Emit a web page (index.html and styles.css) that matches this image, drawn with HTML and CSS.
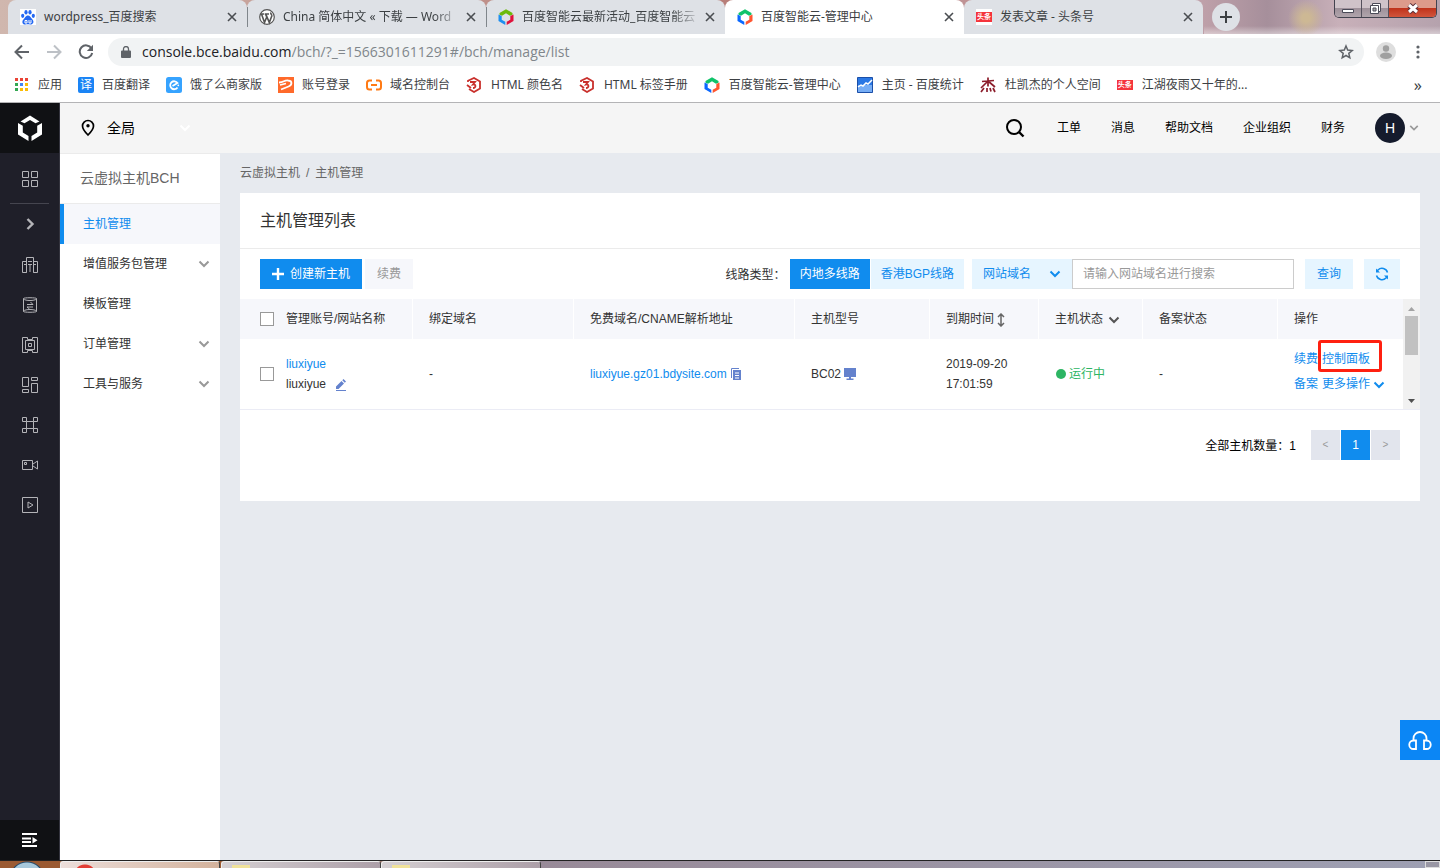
FILE: index.html
```html
<!DOCTYPE html>
<html lang="zh-CN">
<head>
<meta charset="utf-8">
<title>百度智能云-管理中心</title>
<link rel="stylesheet" href="styles.css">
</head>
<body>
<svg class="defs" aria-hidden="true">
  <symbol id="close" viewBox="0 0 10 10"><path d="M1 1l8 8M9 1l-8 8" fill="none" stroke="#4a4d51" stroke-width="1.6"/></symbol>
  <symbol id="down" viewBox="0 0 12 8"><path d="M1.500 1.500L6 6l4.500-4.500" fill="none" stroke="currentColor" stroke-width="2"/></symbol>
  <symbol id="cloud" viewBox="0 0 16 16">
    <path d="M1.500 4L8 .2 14.500 4v1.800L12 6.800 8 4.300 4 6.800 1.500 5.800z" fill="var(--top)"/>
    <path d="M.5 5.500l3.200 1.500v3.800L7.300 12.800V16L.5 12z" fill="var(--left)"/>
    <path d="M15.500 5.500L12.300 7v3.800L8.700 12.800V16l6.800-4z" fill="var(--right)"/>
  </symbol>
  <symbol id="html" viewBox="0 0 16 16"><path d="M2 5V3.800L8 1l6 3.500v7L8 15l-5-3" fill="none" stroke="#c9302c" stroke-width="1.800"/><path d="M4 5h5L7 7.500c3-.5 3.500 3.500 0 3.500M1 8l4 3" fill="none" stroke="#c9302c" stroke-width="1.800"/></symbol>
</svg>

<header class="browser">
  <div class="tabstrip">
    <div class="tab">
      <svg class="fav" viewBox="0 0 16 16"><path fill="#fff" d="M0 0h16v16H0z"/><g fill="#2468f2"><ellipse cx="2.700" cy="6.800" rx="1.600" ry="2.100"/><ellipse cx="6" cy="3.200" rx="1.600" ry="2.200"/><ellipse cx="10" cy="3.200" rx="1.600" ry="2.200"/><ellipse cx="13.300" cy="6.800" rx="1.600" ry="2.100"/><path d="M8 6.500c2 0 2.500 2 4.500 4 2 2.500.5 5-2 5-1.500 0-3.500-.5-5 0-2.500.3-4-2-2.500-4.500C5 9 5.500 6.500 8 6.500z"/></g><path d="M5 11.500h2v2.500H5zM9 11v3h2v-3" fill="none" stroke="#fff"/></svg>
      <span class="tab-title">wordpress_百度搜索</span>
      <button class="tab-close" aria-label="关闭"><svg><use href="#close"/></svg></button>
    </div>
    <div class="tab divided">
      <svg class="fav" viewBox="0 0 16 16"><circle cx="8" cy="8" r="7.300" fill="#fff" stroke="#555" stroke-width="1.200"/><path d="M2.500 5l3 8.500L7.700 8 6.500 5M6.800 5l3.500 8.500 2.500-6.500c.3-1.500-1.500-2-1-3.500M1.800 5h3.500M6 5h4" fill="none" stroke="#555" stroke-width="1.600"/></svg>
      <span class="tab-title fade">China 简体中文 « 下载 — Word</span>
      <button class="tab-close" aria-label="关闭"><svg><use href="#close"/></svg></button>
    </div>
    <div class="tab divided">
      <svg class="fav promo"><use href="#cloud"/></svg>
      <span class="tab-title fade">百度智能云最新活动_百度智能云</span>
      <button class="tab-close" aria-label="关闭"><svg><use href="#close"/></svg></button>
    </div>
    <div class="tab active">
      <svg class="fav console"><use href="#cloud"/></svg>
      <span class="tab-title">百度智能云-管理中心</span>
      <button class="tab-close" aria-label="关闭"><svg><use href="#close"/></svg></button>
    </div>
    <div class="tab">
      <span class="fav news">头条</span>
      <span class="tab-title">发表文章 - 头条号</span>
      <button class="tab-close" aria-label="关闭"><svg><use href="#close"/></svg></button>
    </div>
    <button class="newtab" aria-label="新标签页"><svg viewBox="0 0 12 12"><path d="M6 0v12M0 6h12" stroke="#3c4043" stroke-width="2"/></svg></button>
    <div class="winctl">
      <button aria-label="最小化"><svg viewBox="0 0 14 14"><path d="M1.500 7.500h11v3h-11z" fill="#fff" stroke="#4b4b58"/></svg></button>
      <button aria-label="还原"><svg viewBox="0 0 14 14"><path d="M4.500 1.500h8v8h-8z" fill="#fff" stroke="#4b4b58"/><path d="M2.500 3.500h8v8h-8z" fill="#fff" stroke="#4b4b58"/><path d="M5 6h3v3H5z" fill="#aaa" stroke="#4b4b58"/></svg></button>
      <button class="win-close" aria-label="关闭窗口"><svg viewBox="0 0 14 14"><path d="M3 3l8 7M11 3l-8 7" stroke="#5a3038" stroke-width="5"/><path d="M3 3l8 7M11 3l-8 7" stroke="#fff" stroke-width="3"/></svg></button>
    </div>
  </div>

  <div class="navbar">
    <button aria-label="后退"><svg viewBox="0 0 16 16"><path d="M15 8H2M8 1.500L1.500 8 8 14.500" fill="none" stroke="#5f6368" stroke-width="2"/></svg></button>
    <button aria-label="前进"><svg viewBox="0 0 16 16"><path d="M1 8h13M8 1.500L14.500 8 8 14.500" fill="none" stroke="#bdc1c6" stroke-width="2"/></svg></button>
    <button aria-label="刷新"><svg viewBox="0 0 16 16"><path d="M13.500 4.500A6.300 6.300 0 1 0 14.200 9" fill="none" stroke="#5f6368" stroke-width="2"/><path d="M15 .8V7H8.800z" fill="#5f6368"/></svg></button>
    <div class="omnibox">
      <svg class="lock" viewBox="0 0 10 12"><path d="M1 4.500h8a1 1 0 0 1 1 1V11a1 1 0 0 1-1 1H1a1 1 0 0 1-1-1V5.500a1 1 0 0 1 1-1z" fill="#5f6368"/><path d="M2.500 5V3a2.500 2.500 0 0 1 5 0v2" fill="none" stroke="#5f6368" stroke-width="1.300"/></svg>
      <div class="url"><b>console.bce.baidu.com</b>/bch/?_=1566301611291#/bch/manage/list</div>
      <svg class="star" viewBox="0 0 16 16"><path d="M8 2l1.700 4.100 4.500.4-3.400 2.900 1 4.400L8 11.500l-3.800 2.300 1-4.400L1.800 6.500l4.500-.4z" fill="none" stroke="#5f6368" stroke-width="1.500"/></svg>
    </div>
    <svg class="profile" viewBox="0 0 20 20"><circle cx="10" cy="10" r="10" fill="#dedede"/><circle cx="10" cy="6.500" r="3.200" fill="#a0a0a0"/><ellipse cx="10" cy="13.800" rx="6" ry="3.200" fill="#a0a0a0"/></svg>
    <button class="more" aria-label="菜单"><svg viewBox="0 0 16 16"><g fill="#5f6368"><circle cx="8" cy="3" r="1.600"/><circle cx="8" cy="8" r="1.600"/><circle cx="8" cy="13" r="1.600"/></g></svg></button>
  </div>

  <nav class="bookmarks">
    <a href="#"><svg viewBox="0 0 16 16"><path d="M3 1h3v3H3z" fill="#ea4335"/><path d="M8 1h3v3H8zM13 1h3v3h-3z" fill="#ea4335"/><path d="M3 6h3v3H3z" fill="#34a853"/><path d="M8 6h3v3H8z" fill="#4285f4"/><path d="M13 6h3v3h-3zM8 11h3v3H8zM13 11h3v3h-3z" fill="#fbbc05"/><path d="M3 11h3v3H3z" fill="#34a853"/></svg>应用</a>
    <a href="#"><span class="bm-icon trans">译</span>百度翻译</a>
    <a href="#"><svg viewBox="0 0 16 16"><rect width="16" height="16" rx="2.500" fill="#36a3ff"/><path d="M11.500 10.500A4 4 0 1 1 11.500 6L6.500 9" fill="none" stroke="#fff" stroke-width="1.800"/><circle cx="12.300" cy="8.300" r=".9" fill="#fff"/></svg>饿了么商家版</a>
    <a href="#"><svg viewBox="0 0 16 16"><path fill="#ff6a2b" d="M0 0h16v16H0z"/><path d="M1 5.500c5 0 5-2.500 9-2 5 .5 4 4.500.5 6L3 12.500M2 8l6-1.500" fill="none" stroke="#fff" stroke-width="1.800"/></svg>账号登录</a>
    <a href="#"><svg viewBox="0 0 16 16"><path d="M6 3.500H3.500C1.500 3.500 1 4.500 1 6v4c0 1.500.5 2.500 2.500 2.500H6M10 3.500h2.500c2 0 2.500 1 2.500 2.500v4c0 1.500-.5 2.500-2.500 2.500H10M5 8h6" fill="none" stroke="#ff7a14" stroke-width="2"/></svg>域名控制台</a>
    <a href="#"><svg><use href="#html"/></svg>HTML 颜色名</a>
    <a href="#"><svg><use href="#html"/></svg>HTML 标签手册</a>
    <a href="#"><svg class="console"><use href="#cloud"/></svg>百度智能云-管理中心</a>
    <a href="#"><svg viewBox="0 0 16 16"><path fill="#2b78e4" stroke="#1b4fa8" d="M.5.500h15v15H.5z"/><path d="M1 8h14v7H1z" fill="#76adf5"/><path d="M1 10l3-2 2 1 3-3 2 1 4-4" fill="none" stroke="#fff" stroke-width="1.500"/></svg>主页 - 百度统计</a>
    <a href="#"><svg viewBox="0 0 16 16"><path d="M8 .5v9M2 4.500l12-1M8 4L1 11M8 4l7 6M4 11l-3 4M7 11v4M10 11l1 3.500M13 11l2 4" fill="none" stroke="#8c1d2b" stroke-width="1.700"/></svg>杜凯杰的个人空间</a>
    <a href="#"><span class="bm-icon news">头条</span>江湖夜雨又十年的...</a>
    <button class="overflow" aria-label="更多书签">»</button>
  </nav>
</header>

<div class="app">
  <nav class="rail">
    <a class="logo" href="#" aria-label="百度智能云"><svg viewBox="0 0 24 26"><g fill="#fff"><path d="M2.500 6.500L12 .5l9.500 6-4 1.800L12 5 6.500 8.300z"/><path d="M0 8l4.800 2.700v6.800l5.700 3.500V26L0 19.500z"/><path d="M24 8l-4.800 2.700v6.800L13.500 21v5L24 19.500z"/></g></svg></a>
    <a class="all" href="#" aria-label="全部产品"><svg viewBox="0 0 18 18"><path d="M1.500 1.500h6v6h-6zM10.500 1.500h6v6h-6zM1.500 10.500h6v6h-6zM10.500 10.500h6v6h-6z"/></svg></a>
    <button class="expand" aria-label="展开"><svg viewBox="0 0 18 18"><path class="bold" d="M6.500 4l5 5-5 5"/></svg></button>
    <a href="#" aria-label="云虚拟主机"><svg viewBox="0 0 18 18"><path d="M1.500 5.500h4v11h-4zM12.500 5.500h4v11h-4zM5.500 16.500v-15h7v15M7 5.500h4M7 8.500h4M3 8.500h2M13 8.500h2M9 9v7"/></svg></a>
    <a href="#" aria-label="数据库"><svg viewBox="0 0 18 18"><path d="M2.500 2.500c0-1 13-1 13 0v13c0 1-13 1-13 0zM2.500 3c2 2 11 2 13 0M2.500 15c2-2 11-2 13 0M6 8.500h6L9.500 6M12 11H6l2.500 2"/></svg></a>
    <a href="#" aria-label="网络"><svg viewBox="0 0 18 18"><path d="M6.500 1.500h-5v15h5v-2h5v2h5v-15h-5v2h-5zM4.500 4.500h9v9h-9zM7.500 7.500h3v3h-3z"/></svg></a>
    <a href="#" aria-label="存储"><svg viewBox="0 0 18 18"><path d="M1.500 1.500h6v9h-6zM10.500 1.500h6v3h-6zM1.500 13.500h6v3h-6zM10.500 7.500h6v9h-6z"/></svg></a>
    <a href="#" aria-label="集群"><svg viewBox="0 0 18 18"><path d="M1.500 1.500h4v4h-4zM12.500 1.500h4v4h-4zM1.500 12.500h4v4h-4zM12.500 12.500h4v4h-4zM5.500 5.500h7v7h-7z"/></svg></a>
    <a href="#" aria-label="视频"><svg viewBox="0 0 18 18"><path d="M1.500 4.500h10v9h-10zM12 8l4.500-3v8L12 10M3.500 6.500h2v2h-2z"/></svg></a>
    <a href="#" aria-label="直播"><svg viewBox="0 0 18 18"><path d="M1.500 1.500h15v15h-15zM7 6l5 3-5 3z"/></svg></a>
    <button class="fold" aria-label="收起导航"><svg viewBox="0 0 16 16"><path d="M0 2h15M0 6.500h9M0 10h9M0 14h15" stroke="#fff" stroke-width="2"/><path d="M10.500 5l5 3.300-5 3.200z" fill="#fff"/></svg></button>
  </nav>

  <div class="workspace">
    <header class="topbar">
      <button class="region"><svg class="pin" viewBox="0 0 14 18"><path d="M7 1.500a5.500 5.500 0 0 1 5.500 5.500C12.500 10.500 7 16 7 16S1.500 10.500 1.500 7A5.500 5.500 0 0 1 7 1.500z" fill="none" stroke="#000" stroke-width="1.700"/><circle cx="7" cy="6.800" r="1.700"/></svg><span>全局</span><svg class="chev"><use href="#down"/></svg></button>
      <nav class="toplinks">
        <button class="search" aria-label="搜索"><svg viewBox="0 0 20 20"><circle cx="9" cy="9" r="7" fill="none" stroke="#000" stroke-width="2"/><path d="M14 14l4.500 4.500" stroke="#000" stroke-width="2.400"/></svg></button>
        <a href="#">工单</a><a href="#">消息</a><a href="#">帮助文档</a><a href="#">企业组织</a><a href="#">财务</a>
        <button class="account"><span class="avatar">H</span><svg class="chev"><use href="#down"/></svg></button>
      </nav>
    </header>

    <div class="body">
      <aside class="sidebar">
        <h2>云虚拟主机BCH</h2>
        <a class="current" href="#">主机管理</a>
        <a href="#">增值服务包管理<svg class="chev"><use href="#down"/></svg></a>
        <a href="#">模板管理</a>
        <a href="#">订单管理<svg class="chev"><use href="#down"/></svg></a>
        <a href="#">工具与服务<svg class="chev"><use href="#down"/></svg></a>
      </aside>

      <main class="content">
        <div class="crumbs"><a href="#">云虚拟主机</a><span>/</span><span>主机管理</span></div>
        <section class="panel">
          <h1>主机管理列表</h1>
          <div class="tools">
            <button class="btn primary"><svg viewBox="0 0 12 12"><path d="M6 0v12M0 6h12" stroke="#fff" stroke-width="2.400"/></svg>创建新主机</button>
            <button class="btn disabled" disabled>续费</button>
            <span class="line-label">线路类型<span class="colon">：</span></span>
            <div class="lines"><button class="btn line on">内地多线路</button><button class="btn line">香港BGP线路</button></div>
            <div class="select"><select aria-label="搜索类型"><option>网站域名</option></select><svg class="chev"><use href="#down"/></svg></div>
            <input class="query" type="text" aria-label="网站域名" placeholder="请输入网站域名进行搜索">
            <button class="btn soft">查询</button>
            <button class="btn soft refresh" aria-label="刷新列表"><svg viewBox="0 0 14 14"><path d="M12.500 5.500A5.700 5.700 0 0 0 3 3L1.500 4.500M1.500 8.500A5.700 5.700 0 0 0 11 11l1.500-1.500" fill="none" stroke="#108cee" stroke-width="1.500"/><path d="M1 1.500V5.500h4zM13 12.500V8.500H9z" fill="#108cee"/></svg></button>
          </div>

          <div class="grid">
            <table>
              <colgroup><col class="c-check"><col class="c-name"><col class="c-domain"><col class="c-free"><col class="c-model"><col class="c-date"><col class="c-state"><col class="c-record"><col></colgroup>
              <thead><tr>
                <th class="pick"><input type="checkbox" aria-label="全选"></th>
                <th class="name">管理账号/网站名称</th><th>绑定域名</th><th>免费域名/CNAME解析地址</th><th>主机型号</th>
                <th>到期时间<svg class="sort" viewBox="0 0 8 14"><path d="M4 1v12M1 4l3-3 3 3M1 10l3 3 3-3" fill="none" stroke="#666" stroke-width="1.500"/></svg></th>
                <th>主机状态<svg class="chev dark"><use href="#down"/></svg></th><th>备案状态</th><th>操作</th>
              </tr></thead>
              <tbody><tr>
                <td class="pick"><input type="checkbox" aria-label="选择 liuxiyue"></td>
                <td class="name"><a href="#">liuxiyue</a><br>liuxiyue<svg class="edit" viewBox="0 0 12 14"><path d="M1 8.500L6.500 3l2.500 2.500L3.500 11H1zM7.300 2.200L8.500 1 11 3.500 9.800 4.700z" fill="#6482cd"/><path d="M1 12.500h10" stroke="#6482cd"/></svg></td>
                <td>-</td>
                <td><a href="#">liuxiyue.gz01.bdysite.com</a><svg class="copy" viewBox="0 0 12 12"><path d="M.5 10V.500H8" fill="none" stroke="#6482cd"/><path d="M2 2h8v10H2z" fill="#6482cd"/><path d="M4 5h4M4 7.500h4M4 10h4" stroke="#fff"/></svg></td>
                <td>BC02<svg class="screen" viewBox="0 0 12 12"><path d="M0 0h12v9H0zM5 9h2v2H5zM2.500 10.500h7V12h-7z" fill="#6482cd"/></svg></td>
                <td>2019-09-20 17:01:59</td>
                <td class="running"><i></i>运行中</td>
                <td>-</td>
                <td class="ops"><div><a href="#">续费</a><a class="marked" href="#">控制面板</a></div><div><a href="#">备案</a><a href="#">更多操作<svg class="chev"><use href="#down"/></svg></a></div></td>
              </tr></tbody>
            </table>
            <div class="scroll"><svg viewBox="0 0 9 5"><path d="M1 5l3.500-4L8 5z" fill="#a3a3a3"/></svg><i></i><svg class="end" viewBox="0 0 9 5"><path d="M1 0l3.500 4L8 0z" fill="#505050"/></svg></div>
          </div>

          <div class="pager"><span>全部主机数量<span class="colon">：</span>1</span><button disabled>&lt;</button><button class="on">1</button><button disabled>&gt;</button></div>
        </section>
      </main>
    </div>
  </div>
  <button class="support" aria-label="在线客服"><svg viewBox="0 0 26 24"><path d="M6.500 13V10.500a6.500 6.500 0 0 1 13 0V13M9 12.500H6.500a4 4 0 0 0 0 8.500H9zM17 12.500h2.500a4 4 0 0 1 0 8.500H17z" fill="none" stroke="#fff" stroke-width="1.800"/></svg></button>
</div>

<footer class="taskbar">
  <span class="start"></span>
  <span class="task chrome"></span><span class="task folder"></span><span class="task folder lit"></span>
  <span class="desk"></span>
</footer>
</body>
</html>
```
FILE: styles.css
```css
* { box-sizing: border-box; }
html, body { height: 100%; margin: 0; }
body {
  display: flex;
  flex-direction: column;
  overflow: hidden;
  font: 12px/20px "Liberation Sans", "Noto Sans CJK SC", sans-serif;
  color: #333;
  background: #e7eaef;
}
a { color: inherit; text-decoration: none; }
button { border: 0; padding: 0; margin: 0; background: none; font: inherit; color: inherit; }
svg { flex: none; display: block; }
h1, h2 { margin: 0; font-weight: 400; }
.defs { position: absolute; width: 0; height: 0; }
.chev { width: 12px; height: 8px; color: #999; }
.colon { font-family: "Noto Sans CJK TC", sans-serif; }
.promo { --top: #6cba0b; --left: #1e8ff0; --right: #e0123c; }
.console { --top: #0fc36a; --left: #0a68ff; --right: #ff5630; }

/* Browser window */
.browser { flex: none; background: #fff; border-bottom: 1px solid #b4b4b6; font-family: "Noto Sans", "Noto Sans CJK SC", sans-serif; }
.tabstrip {
  display: flex;
  height: 34px;
  padding-left: 8px;
  background:
    radial-gradient(circle at 1306px 18px, #cdb894 4px, transparent 18px),
    linear-gradient(transparent 26px, #ffffff70) 1204px 0 / 236px 34px no-repeat,
    linear-gradient(90deg, #d0b7ae, #b77d78 50%, #c7a6ae 82%, #a68f9b 88%, #c8b0b9 93%, #b5a2ad);
}
.tab {
  flex: 0 1 239px;
  min-width: 0;
  display: flex;
  align-items: center;
  padding: 0 10px 0 12px;
  background: #dee1e6;
  border-radius: 8px 8px 0 0;
  color: #3c4043;
}
.divided { background: linear-gradient(#80868b, #80868b) 0 7px / 1px 20px no-repeat #dee1e6; }
.active { background: #fff; }
.fav { flex: none; width: 16px; height: 16px; }
.tab-title { flex: 1; min-width: 0; margin: 0 8px; white-space: nowrap; }
.fade { mask-image: linear-gradient(90deg, #000 86%, transparent 102%); }
.tab-close { width: 10px; height: 10px; }
.tab-close svg { width: 10px; height: 10px; }
.news { display: flex; align-items: center; justify-content: center; background: linear-gradient(#fff 3px, #f5343c 3px 13px, #fff 13px); color: #fff; font-size: 7px; font-weight: 700; white-space: nowrap; }
.newtab { display: grid; place-items: center; width: 28px; height: 28px; margin: 3px 0 0 9px; border-radius: 50%; background: #dee1e6; }
.newtab svg { width: 12px; height: 12px; }
.winctl { display: flex; height: 18px; margin: 0 3px 0 auto; border: 1px solid #43434f; border-top: 0; border-radius: 0 0 5px 5px; overflow: hidden; }
.winctl button { display: grid; place-items: center; width: 27px; background: linear-gradient(#cfc3c9 50%, #9e919a 50%, #b1a5ac); border-right: 1px solid #55515d; }
.winctl .win-close { width: 47px; border: 0; background: linear-gradient(#dd9b8b 45%, #c0341c 50%, #d1553c); }
.winctl svg { width: 14px; height: 14px; }

.navbar { display: flex; align-items: center; height: 36px; padding: 0 14px; }
.navbar button { margin-right: 16px; }
.navbar button svg { width: 16px; height: 16px; }
.omnibox { flex: 1; display: flex; align-items: center; height: 28px; margin-right: 12px; padding: 0 10px 0 13px; border-radius: 14px; background: #f1f3f4; }
.navbar .omnibox { margin-left: -2px; }
.lock { width: 10px; height: 12px; }
.url { flex: 1; margin-left: 11px; font-family: "Open Sans", sans-serif; font-size: 14px; color: #80868b; }
.url b { font-weight: 400; color: #202124; }
.star { width: 16px; height: 16px; }
.profile { width: 20px; height: 20px; }
.navbar .more { margin: 0 0 0 14px; }

.bookmarks { display: flex; align-items: center; gap: 16px; height: 32px; padding: 0 18px 2px 12px; color: #3c4043; white-space: nowrap; }
.bookmarks a { display: flex; align-items: center; gap: 8px; }
.bookmarks a:first-child { gap: 10px; }
.bookmarks a:nth-child(n+6) { gap: 9px; }
.bookmarks svg, .bm-icon { flex: none; width: 16px; height: 16px; }
.trans { border-radius: 2px; background: #1a84f5; color: #fff; line-height: 16px; text-align: center; }
.overflow { margin-left: auto; font-size: 16px; }

/* Console shell */
.app { flex: 1; min-height: 0; display: flex; position: relative; }
.rail { flex: none; display: flex; flex-direction: column; width: 60px; background: #1f1f29; border-right: 1px solid #34343e; }
.rail > * { display: grid; place-items: center; height: 40px; }
.rail svg { width: 18px; height: 18px; fill: none; stroke: #b4b4b8; }
.rail .logo { height: 50px; background: #101114; }
.rail .logo svg { width: 24px; height: 26px; stroke: none; }
.rail .all { height: 51px; margin: 0 10px; padding-top: 1px; border-bottom: 1px solid #45454f; }
.rail .bold { stroke-width: 2.4; }
.rail .expand { height: 41px; padding-bottom: 1px; }
.rail .fold { margin-top: auto; background: #101114; }
.rail .fold svg { width: 16px; height: 16px; stroke: none; }
.workspace { flex: 1; min-width: 0; display: flex; flex-direction: column; }
.topbar { display: flex; align-items: center; justify-content: space-between; height: 50px; padding: 0 21px 0 20px; background: #f5f5f5; color: #000; }
.region { display: flex; align-items: center; font-size: 14px; }
.pin { width: 14px; height: 18px; margin: 0 12px 0 1px; }
.region .chev { margin-left: 44px; color: #fff; }
.toplinks { display: flex; align-items: center; gap: 30px; }
.search { margin-right: 2px; }
.search svg { width: 20px; height: 20px; }
.account { display: flex; align-items: center; gap: 4px; }
.account .chev { width: 10px; }
.avatar { width: 30px; height: 30px; border-radius: 50%; background: #151b2c; color: #fff; font-size: 14px; line-height: 30px; text-align: center; }
.body { flex: 1; display: flex; min-height: 0; }
.sidebar { flex: none; width: 160px; background: #fff; border-top: 1px solid #ebebeb; }
.sidebar h2 { height: 50px; padding-left: 20px; border-bottom: 1px solid #ebebeb; font-size: 14px; line-height: 49px; color: #666; }
.sidebar a { display: flex; align-items: center; justify-content: space-between; height: 40px; padding: 0 10px 0 23px; }
.sidebar .current { padding-left: 19px; border-left: 4px solid #108cee; background: #f6f7fb; color: #108cee; }
.content { flex: 1; min-width: 0; padding: 0 20px; }
.crumbs { display: flex; gap: 6px; height: 40px; line-height: 40px; color: #666; }

/* Host list */
.panel { padding-bottom: 41px; background: #fff; }
.panel h1 { padding-left: 20px; border-bottom: 1px solid #ebebeb; font-size: 16px; line-height: 55px; }
.tools { display: flex; align-items: center; padding: 10px 20px; }
.btn { flex: none; height: 30px; padding: 0 12px; white-space: nowrap; }
.primary { display: flex; align-items: center; gap: 6px; background: #108cee; color: #fff; }
.primary svg { width: 12px; height: 12px; }
.disabled { margin-left: 3px; background: #f6f7fb; color: #999; }
.line-label { margin: 0 4px 0 auto; white-space: nowrap; }
.lines { display: flex; gap: 1px; margin-right: 8px; }
.line, .soft { background: #e6f5ff; color: #108cee; }
.line { padding: 0 10px; }
.on { background: #108cee; color: #fff; }
.select { display: grid; align-items: center; width: 100px; }
.select > * { grid-area: 1 / 1; }
.select select { width: 100%; height: 30px; padding: 0 11px; border: 0; border-radius: 0; appearance: none; background: #e6f5ff; color: #108cee; font: inherit; }
.select .chev { justify-self: end; margin-right: 11px; color: #108cee; pointer-events: none; }
.query { flex: 0 1 222px; min-width: 0; height: 30px; padding: 0 10px; border: 1px solid #ccc; font: inherit; }
.query::placeholder { color: #999; }
.soft { margin-left: 11px; }
.refresh { padding: 0 11px; }
.refresh svg { width: 14px; height: 14px; }
.grid { display: flex; border-bottom: 1px solid #ebecf5; }
table { flex: 1; width: 0; table-layout: fixed; border-collapse: separate; border-spacing: 0; }
.c-check { width: 46px; }
.c-name { width: 127px; }
.c-domain { width: 161px; }
.c-free { width: 221px; }
.c-model { width: 135px; }
.c-date { width: 109px; }
.c-state { width: 104px; }
.c-record { width: 135px; }
th { height: 40px; padding: 0 0 0 16px; background: #f6f7fb; border-right: 1px solid #fff; font-weight: 400; text-align: left; white-space: nowrap; }
th.pick { border-right: 0; }
th:last-child { border-right: 0; }
td { height: 70px; padding: 0 20px 0 16px; white-space: nowrap; }
td:nth-child(6) { white-space: normal; }
th.pick, td.pick { padding: 0 0 0 20px; }
th.name, td.name { padding: 0; }
td a { color: #108cee; }
.pick input { display: block; appearance: none; width: 14px; height: 14px; margin: 0; border: 1px solid #999; background: #fff; }
th svg, td svg { display: inline-block; vertical-align: middle; }
.sort { width: 8px; height: 14px; margin-left: 3px; }
.dark { margin-left: 5px; color: #555; }
.edit { width: 12px; height: 14px; margin-left: 9px; }
.copy { width: 12px; height: 12px; margin-left: 4px; }
.screen { width: 12px; height: 12px; margin-left: 3px; }
td .copy, td .screen { vertical-align: -2px; }
.running { color: #2db563; }
.running i { display: inline-block; width: 10px; height: 10px; margin: 0 3px 0 1px; border-radius: 50%; background: #2db563; vertical-align: -1px; }
td.ops { padding: 0 0 4px 16px; }
.ops > div { display: flex; gap: 4px; line-height: 25px; }
.ops .chev { margin-left: 3px; color: #108cee; }
.marked { position: relative; }
.marked::after { content: ""; position: absolute; inset: -7px -12px 0 -4px; border: 3px solid #ff2010; border-radius: 3px; }
.scroll { flex: none; display: flex; flex-direction: column; align-items: center; width: 17px; padding: 7px 2px 5px; background: #f1f1f1; }
.scroll svg { width: 9px; height: 5px; }
.scroll i { width: 13px; height: 39px; margin-top: 5px; background: #c1c1c1; }
.scroll .end { margin-top: auto; }
.pager { display: flex; align-items: center; justify-content: flex-end; gap: 1px; padding: 20px 20px 0 0; color: #000; }
.pager > span { margin-right: 14px; }
.pager button { width: 29px; height: 30px; background: #e2e5ed; }
.pager button:disabled { color: #999; font-size: 10px; }
.pager .on { background: #108cee; color: #fff; }
.support { position: absolute; right: 0; bottom: 100px; display: grid; place-items: center; width: 40px; height: 40px; background: #0b86f5; }
.support svg { width: 26px; height: 24px; }

/* Desktop taskbar */
.taskbar { flex: none; display: flex; height: 8px; overflow: hidden; border-top: 1px solid #222; background: linear-gradient(90deg, #9b5a32 220px, #988a98 540px, #9ea0b3); }
.start { width: 60px; background: radial-gradient(circle at 27px 18px, #a8c9dc 16px, #244a6b 17px, transparent 18px); }
.task { width: 160px; border: 1px solid #eee; border-right-color: #444; border-bottom: 0; border-radius: 3px 3px 0 0; background: linear-gradient(90deg, #e3dcda, #b3a8b0); }
.chrome { margin-right: 1px; background: radial-gradient(circle at 24px 14px, #e23e35 11px, transparent 12px), linear-gradient(90deg, #ecdeda, #d3b29c); }
.folder { background: linear-gradient(#f0e29a, #f0e29a) 10px 3px / 18px 6px no-repeat, linear-gradient(90deg, #d5d0d3, #ac9fa8); }
.desk { width: 15px; margin-left: auto; border: 1px solid #ddd; background: #9997a4; }
```
